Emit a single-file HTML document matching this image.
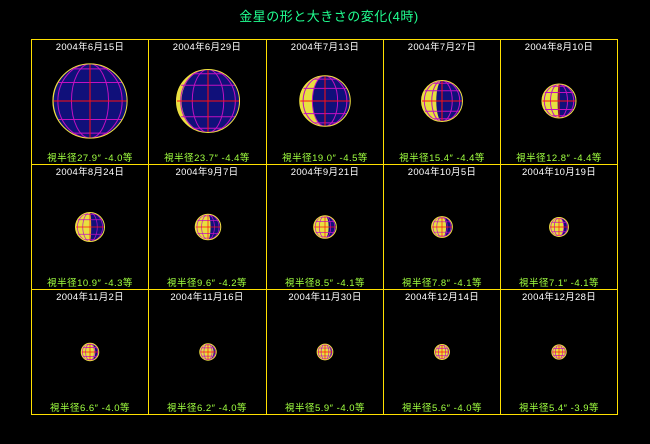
<!DOCTYPE html>
<html><head><meta charset="utf-8"><style>
html,body{margin:0;padding:0;background:#000;width:650px;height:444px;overflow:hidden}
svg{display:block}
.t{font-family:"Liberation Sans","Noto Sans CJK JP",sans-serif}
</style></head><body>
<svg id="s" width="650" height="444" xmlns="http://www.w3.org/2000/svg">
<rect width="650" height="444" fill="#000"/>
<text class="t" x="329" y="21" fill="#20ff90" font-size="13" text-anchor="middle" letter-spacing="0.5">金星の形と大きさの変化(4時)</text>
<g stroke="#ffe000" stroke-width="1" fill="none">
<rect x="31.5" y="39.5" width="586" height="375"/>
<line x1="148.5" y1="39" x2="148.5" y2="415"/>
<line x1="266.5" y1="39" x2="266.5" y2="415"/>
<line x1="383.5" y1="39" x2="383.5" y2="415"/>
<line x1="500.5" y1="39" x2="500.5" y2="415"/>
<line x1="31" y1="164.5" x2="618" y2="164.5"/>
<line x1="31" y1="289.5" x2="618" y2="289.5"/>
</g>
<g id="planets"></g>
<g class="t" font-size="9.5" fill="#fff" text-anchor="middle" letter-spacing="0.3">
<text x="90" y="50">2004年6月15日</text>
<text x="207" y="50">2004年6月29日</text>
<text x="325" y="50">2004年7月13日</text>
<text x="442" y="50">2004年7月27日</text>
<text x="559" y="50">2004年8月10日</text>
<text x="90" y="175">2004年8月24日</text>
<text x="207" y="175">2004年9月7日</text>
<text x="325" y="175">2004年9月21日</text>
<text x="442" y="175">2004年10月5日</text>
<text x="559" y="175">2004年10月19日</text>
<text x="90" y="300">2004年11月2日</text>
<text x="207" y="300">2004年11月16日</text>
<text x="325" y="300">2004年11月30日</text>
<text x="442" y="300">2004年12月14日</text>
<text x="559" y="300">2004年12月28日</text>
</g>
<g class="t" font-size="9.5" fill="#a0ff40" text-anchor="middle" letter-spacing="0.5">
<text x="90" y="161">視半径27.9″ -4.0等</text>
<text x="207" y="161">視半径23.7″ -4.4等</text>
<text x="325" y="161">視半径19.0″ -4.5等</text>
<text x="442" y="161">視半径15.4″ -4.4等</text>
<text x="559" y="161">視半径12.8″ -4.4等</text>
<text x="90" y="286">視半径10.9″ -4.3等</text>
<text x="207" y="286">視半径9.6″ -4.2等</text>
<text x="325" y="286">視半径8.5″ -4.1等</text>
<text x="442" y="286">視半径7.8″ -4.1等</text>
<text x="559" y="286">視半径7.1″ -4.1等</text>
<text x="90" y="411">視半径6.6″ -4.0等</text>
<text x="207" y="411">視半径6.2″ -4.0等</text>
<text x="325" y="411">視半径5.9″ -4.0等</text>
<text x="442" y="411">視半径5.6″ -4.0等</text>
<text x="559" y="411">視半径5.4″ -3.9等</text>
</g>
</svg>
<script>
var R=[27.9,23.7,19.0,15.4,12.8,10.9,9.6,8.5,7.8,7.1,6.6,6.2,5.9,5.6,5.4];
var K=[0.01,0.08,0.25,0.36,0.46,0.54,0.6,0.66,0.7,0.75,0.8,0.84,0.87,0.9,0.92];
var cxs=[90,208,325,442,559], cys=[101,227,352];
var h='';
for(var i=0;i<15;i++){
 var cx=cxs[i%5], cy=cys[Math.floor(i/5)], r=R[i]*1.33, k=K[i];
 var a=Math.abs(1-2*k)*r, sw=k<0.5?1:0;
 var w=r<16?0.7:1;
 h+='<clipPath id="c'+i+'"><circle cx="'+cx+'" cy="'+cy+'" r="'+r+'"/></clipPath>';
 h+='<circle cx="'+cx+'" cy="'+cy+'" r="'+r+'" fill="#e8e040"/>';
 h+='<path d="M'+cx+','+(cy-r)+' A'+r+','+r+' 0 0 1 '+cx+','+(cy+r)+' A'+a+','+r+' 0 0 '+sw+' '+cx+','+(cy-r)+'Z" fill="#10107a"/>';
 h+='<g clip-path="url(#c'+i+')" fill="none" stroke-width="'+w+'">';
 [0.5,0.866].forEach(function(s){
  h+='<ellipse cx="'+cx+'" cy="'+cy+'" rx="'+(r*s)+'" ry="'+r+'" stroke="#c010c0"/>';
  h+='<line x1="'+(cx-r)+'" y1="'+(cy-r*s)+'" x2="'+(cx+r)+'" y2="'+(cy-r*s)+'" stroke="#c010c0"/>';
  h+='<line x1="'+(cx-r)+'" y1="'+(cy+r*s)+'" x2="'+(cx+r)+'" y2="'+(cy+r*s)+'" stroke="#c010c0"/>';
 });
 h+='<line x1="'+(cx-r)+'" y1="'+cy+'" x2="'+(cx+r)+'" y2="'+cy+'" stroke="#ff1010"/>';
 h+='<line x1="'+cx+'" y1="'+(cy-r)+'" x2="'+cx+'" y2="'+(cy+r)+'" stroke="#ff1010"/>';
 h+='</g><circle cx="'+cx+'" cy="'+cy+'" r="'+r+'" fill="none" stroke="#f0e040" stroke-width="1"/>';
}
document.getElementById('planets').innerHTML=h;
</script>
</body></html>
